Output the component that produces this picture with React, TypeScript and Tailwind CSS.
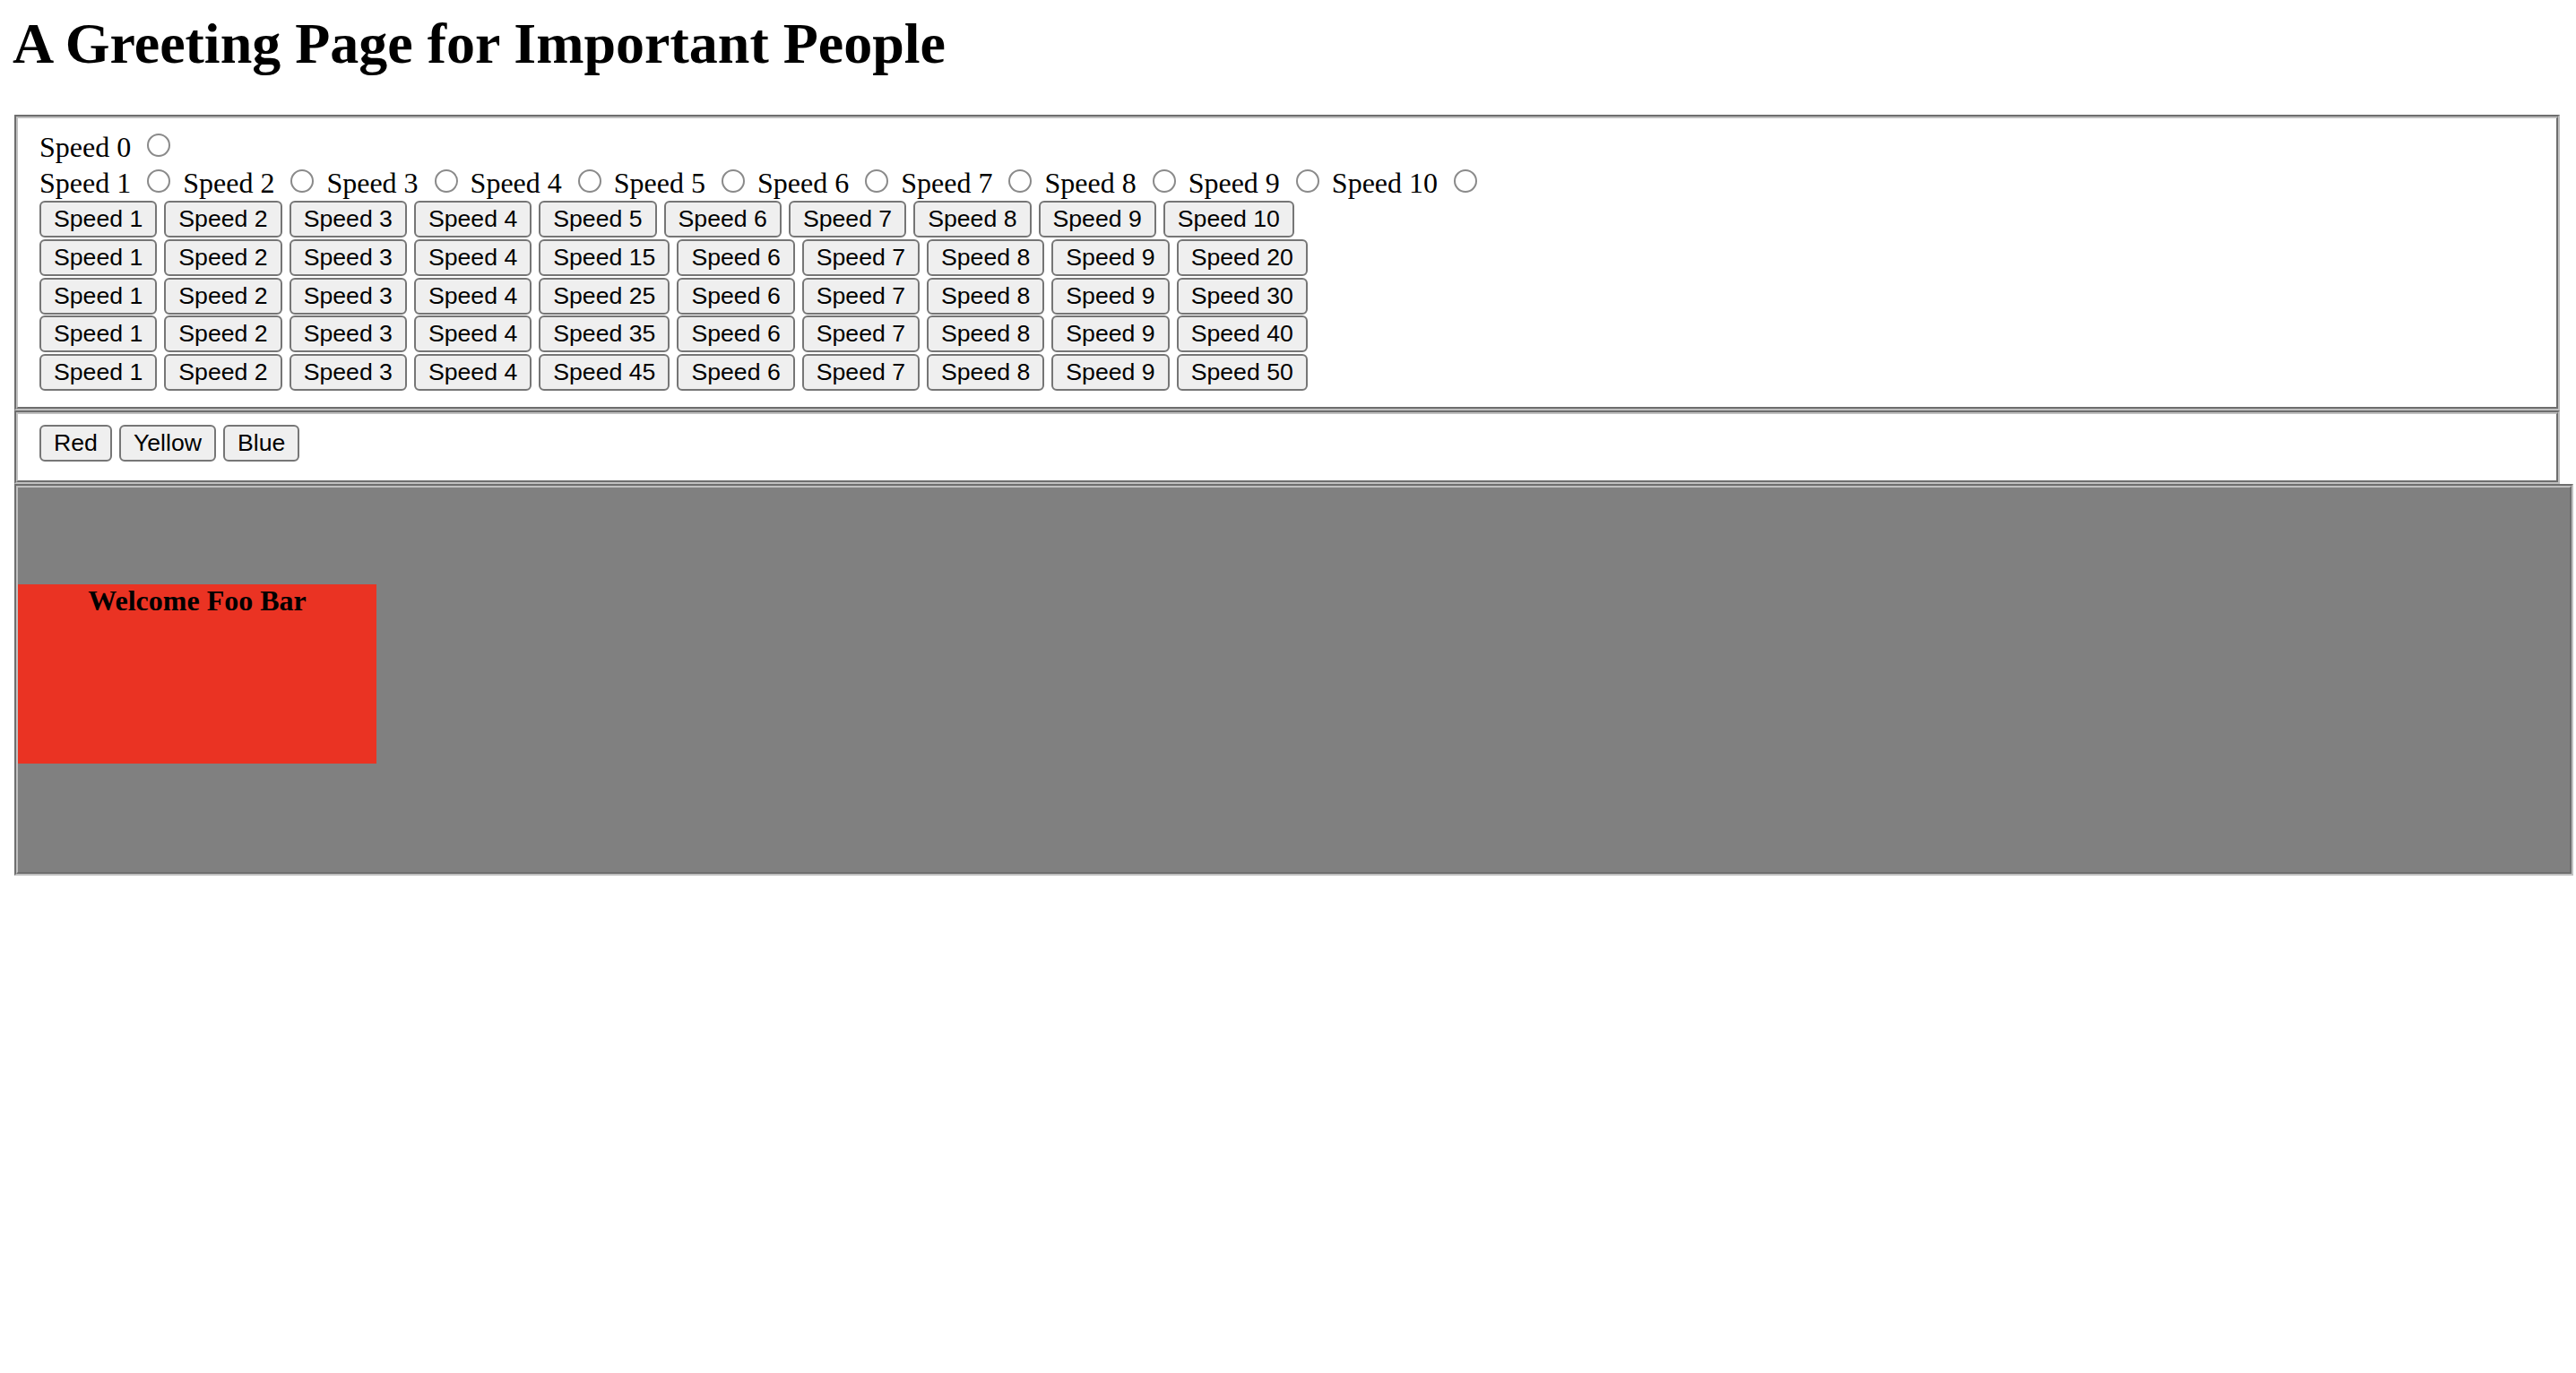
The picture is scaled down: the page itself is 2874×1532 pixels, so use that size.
import { Fragment } from 'react';

const buttonRows: string[][] = [
  ['1', '2', '3', '4', '5', '6', '7', '8', '9', '10'],
  ['1', '2', '3', '4', '15', '6', '7', '8', '9', '20'],
  ['1', '2', '3', '4', '25', '6', '7', '8', '9', '30'],
  ['1', '2', '3', '4', '35', '6', '7', '8', '9', '40'],
  ['1', '2', '3', '4', '45', '6', '7', '8', '9', '50'],
];

function Radio() {
  return (
    <span className="inline-block w-[26px] h-[26px] ml-[10px] mr-[6px] mt-[6px] rounded-full border-2 border-[#8a8a8a] bg-white align-baseline" />
  );
}

function NativeButton({ label }: { label: string }) {
  return (
    <button className="h-[41px] px-[14px] border-2 border-[#767676] rounded-[6px] bg-[#efefef] text-black text-[26.667px] leading-none whitespace-nowrap font-['Liberation_Sans',Arial,sans-serif]">
      {label}
    </button>
  );
}

function Groove({ children, className = '' }: { children: React.ReactNode; className?: string }) {
  return (
    <div className={`border-2 border-t-[#6e6e6e] border-l-[#6e6e6e] border-b-[#c0c0c0] border-r-[#c0c0c0] ${className}`}>
      <div className="border-2 border-t-[#c0c0c0] border-l-[#c0c0c0] border-b-[#6e6e6e] border-r-[#6e6e6e]">
        {children}
      </div>
    </div>
  );
}

export default function App() {
  return (
    <div className="min-h-screen bg-white text-black pt-[12px] px-[16px] pb-[16px] font-['Liberation_Serif','Times_New_Roman',serif]">
      <h1 className="text-[64px] font-bold leading-[73.6px] mb-[42.67px] -ml-[2px]">
        A Greeting Page for Important People
      </h1>

      <Groove className="mr-[2px]">
        <div className="pt-[11.2px] px-[24px] pb-[17px]">
          <div className="text-[32px] leading-[normal] whitespace-nowrap">
            Speed 0 <Radio />
          </div>
          <div className="text-[32px] leading-[normal] whitespace-nowrap">
            {Array.from({ length: 10 }, (_, i) => (
              <Fragment key={i}>
                {i > 0 ? ' ' : ''}Speed {i + 1} <Radio />
              </Fragment>
            ))}
          </div>
          <div className="flex flex-col">
            {buttonRows.map((row, r) => (
              <div key={r} className="flex items-center gap-[8px] h-[42.67px]">
                {row.map((n, i) => (
                  <NativeButton key={i} label={`Speed ${n}`} />
                ))}
              </div>
            ))}
          </div>
        </div>
      </Groove>

      <Groove className="mr-[2px]">
        <div className="pt-[11.2px] px-[24px] pb-[20px]">
          <div className="flex items-center gap-[8px] h-[42.67px]">
            <NativeButton label="Red" />
            <NativeButton label="Yellow" />
            <NativeButton label="Blue" />
          </div>
        </div>
      </Groove>

      <Groove className="w-[2855px]">
        <div className="bg-[#808080] pt-[108px] pb-[121px]">
          <div className="w-[400px] h-[200px] bg-[#ea3323]">
            <h4 className="text-center text-[32px] font-bold leading-[normal]">Welcome Foo Bar</h4>
          </div>
        </div>
      </Groove>
    </div>
  );
}
